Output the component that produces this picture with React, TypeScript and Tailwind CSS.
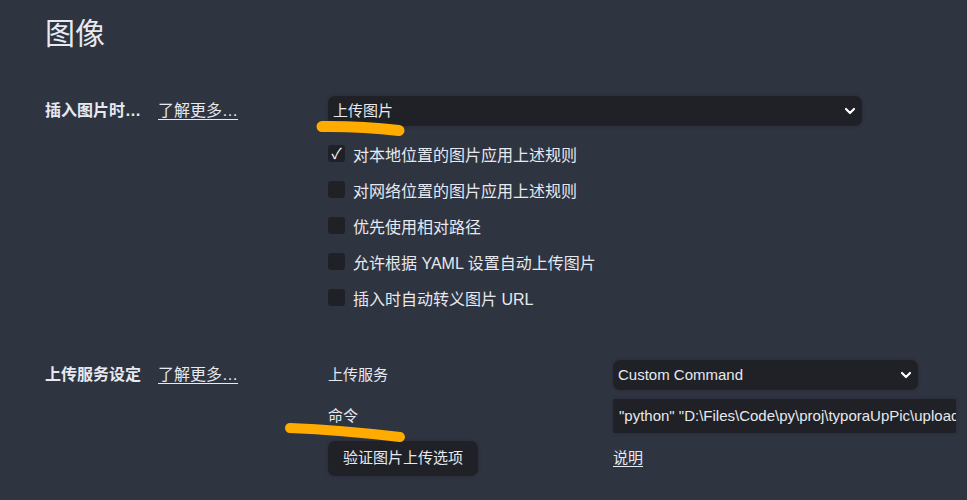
import { ChevronDown } from 'lucide-react'

const rules = [
  { label: '对本地位置的图片应用上述规则', checked: true },
  { label: '对网络位置的图片应用上述规则', checked: false },
  { label: '优先使用相对路径', checked: false },
  { label: '允许根据 YAML 设置自动上传图片', checked: false },
  { label: '插入时自动转义图片 URL', checked: false },
]

function Checkbox({ label, checked }: { label: string; checked: boolean }) {
  return (
    <label className="flex items-center h-[36px] gap-[8px]">
      <span className="w-[17px] h-[17px] rounded-[3px] bg-[#1f2126] flex items-center justify-center text-[15px] leading-none text-white">
        {checked ? '✓' : ''}
      </span>
      <span className="text-[16px] mt-[6px]">{label}</span>
    </label>
  )
}

function Select({ value, className }: { value: string; className: string }) {
  return (
    <div className={`h-[30px] rounded-[7px] bg-[#1f2126] shadow-[0_0_4px_rgba(0,0,0,0.18)] flex items-center justify-between pl-[5px] pr-[4px] text-[15px] ${className}`}>
      <span>{value}</span>
      <ChevronDown className="w-[16px] h-[16px] text-white" strokeWidth={3.2} />
    </div>
  )
}

function LearnMore() {
  return <a className="underline underline-offset-[3px] text-[16px] text-[#e6e9ef]">了解更多…</a>
}

export default function App() {
  return (
    <div
      className="relative min-h-screen h-[500px] overflow-hidden bg-[#2f3441] text-[#e6e9ef] pl-[45px] pt-[16px]"
      style={{ fontFamily: '"Liberation Sans", "Noto Sans CJK SC", sans-serif' }}
    >
      <h1 className="text-[30px] leading-[36px]">图像</h1>

      {/* insert image section */}
      <div className="flex mt-[44px]">
        <div className="w-[283px] h-[30px] flex items-center gap-[17px]">
          <span className="text-[16px] font-bold">插入图片时…</span>
          <LearnMore />
        </div>
        <div className="w-[534px]">
          <Select value="上传图片" className="w-[534px]" />
          <div className="mt-[9px]">
            {rules.map((r) => (
              <Checkbox key={r.label} label={r.label} checked={r.checked} />
            ))}
          </div>
        </div>
      </div>

      {/* upload service section */}
      <div className="flex mt-[45px]">
        <div className="w-[283px] h-[30px] flex items-center gap-[17px]">
          <span className="text-[16px] font-bold">上传服务设定</span>
          <LearnMore />
        </div>
        <div className="flex-1">
          <div className="flex items-center h-[30px]">
            <span className="w-[285px] text-[15px]">上传服务</span>
            <Select value="Custom Command" className="w-[305px]" />
          </div>
          <div className="flex items-center mt-[9px]">
            <span className="w-[285px] text-[15px]">命令</span>
            <div className="w-[343px] h-[34px] bg-[#1f2126] rounded-[2px] shadow-[0_0_4px_rgba(0,0,0,0.18)] overflow-hidden flex items-center pl-[6px] text-[15px] whitespace-nowrap">
              "python" "D:\Files\Code\py\proj\typoraUpPic\upload.py"
            </div>
          </div>
          <div className="flex items-center mt-[8px]">
            <div className="w-[285px]">
              <button className="h-[35px] px-[15px] rounded-[7px] bg-[#1f2126] shadow-[0_0_4px_rgba(0,0,0,0.18)] text-[15px] text-[#e6e9ef]">
                验证图片上传选项
              </button>
            </div>
            <a className="underline underline-offset-[3px] text-[15px]">说明</a>
          </div>
        </div>
      </div>

      {/* hand-drawn annotations */}
      <svg className="absolute inset-0 pointer-events-none" width="967" height="500">
        <path d="M322 126.5 Q 360 126 399 130.5" stroke="#ffab00" strokeWidth="11" strokeLinecap="round" fill="none" />
        <path d="M290 428 Q 340 430 400 437" stroke="#ffab00" strokeWidth="10" strokeLinecap="round" fill="none" />
      </svg>
    </div>
  )
}
